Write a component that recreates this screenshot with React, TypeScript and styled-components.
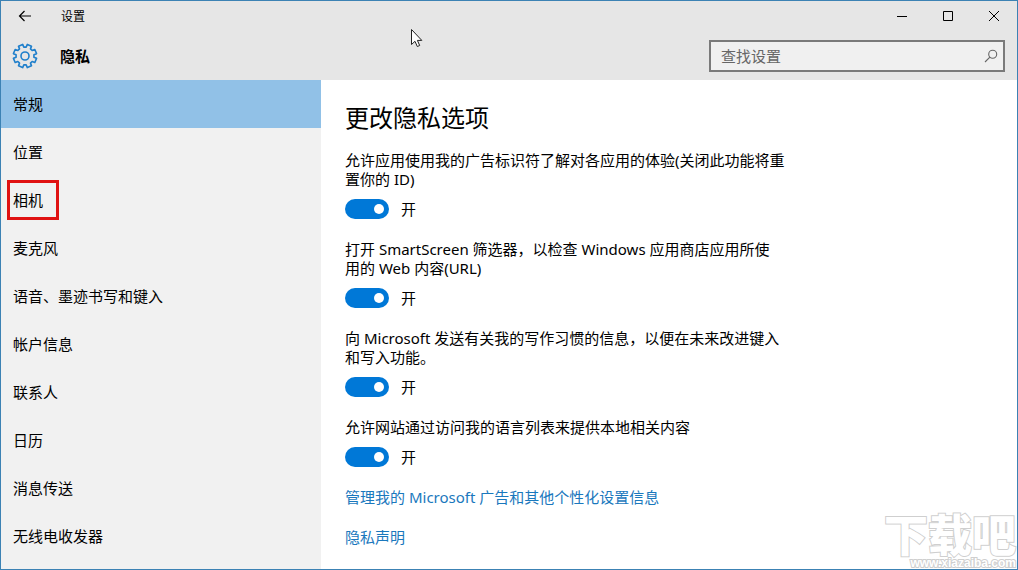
import React from "react";
import styled, { createGlobalStyle } from "styled-components";

const GlobalStyle = createGlobalStyle`
  * { box-sizing: border-box; }
  body {
    margin: 0;
    background: #fff;
    color: #000;
    font-family: "Noto Sans", "Noto Sans CJK SC", sans-serif;
    font-size: 15px;
    line-height: 19px;
  }
`;

const Window = styled.div`
  position: relative;
  display: flex;
  flex-direction: column;
  min-height: 100vh;
  overflow: hidden;
  border: 1px solid #3c82b4;
`;

const TitleBar = styled.header`
  display: flex;
  flex: none;
  align-items: center;
  height: 31px;
  padding-bottom: 1px;
  background: #e6e6e6;
`;

const BarButton = styled.button<{ $wide?: boolean }>`
  display: grid;
  place-items: center;
  width: ${(p) => (p.$wide ? "48px" : "46px")};
  height: 30px;
  padding: 0;
  border: 0;
  background: transparent;
  color: #000;
`;

const WindowTitle = styled.span`
  flex: 1;
  padding-left: 12px;
  font-size: 12px;
`;

const PageBar = styled.div`
  display: flex;
  flex: none;
  align-items: center;
  gap: 22px;
  height: 48px;
  padding: 0 12px 0 11px;
  background: #e6e6e6;
`;

const PageName = styled.h1`
  flex: 1;
  margin: 0;
  font-size: 15px;
  font-weight: 700;
`;

const SearchBox = styled.label`
  display: flex;
  align-items: center;
  width: 296px;
  height: 32px;
  padding: 0 5px 0 10px;
  border: 2px solid #7a7a7a;
  background: #f0f0f0;
`;

const SearchInput = styled.input`
  flex: 1;
  min-width: 0;
  padding: 0;
  border: 0;
  outline: 0;
  background: transparent;
  font: inherit;
  &::placeholder { color: #666; opacity: 1; }
`;

const Body = styled.div`
  display: flex;
  flex: 1;
`;

const Sidebar = styled.nav`
  flex: none;
  width: 320px;
  background: #f1f1f1;
`;

const NavItem = styled.a<{ $active?: boolean }>`
  position: relative;
  display: flex;
  align-items: center;
  height: 48px;
  padding: 0 12px;
  background: ${(p) => (p.$active ? "#91c1e7" : "transparent")};
  color: #000;
  text-decoration: none;
`;

const Marker = styled.span`
  position: absolute;
  top: 4px;
  left: 6px;
  width: 52px;
  height: 40px;
  border: 3px solid #e01212;
`;

const Content = styled.main`
  flex: 1;
  min-width: 0;
  padding: 22px 24px 0;
`;

const Heading = styled.h2`
  margin: 0 0 17px;
  font-size: 24px;
  font-weight: 400;
  line-height: 32px;
`;

const Options = styled.div`
  display: flex;
  flex-direction: column;
  align-items: flex-start;
  gap: 21px;
  max-width: 444px;
`;

const Option = styled.div`
  display: flex;
  flex-direction: column;
  gap: 10px;
`;

const OptionText = styled.label`
  white-space: pre-line;
`;

const ToggleRow = styled.div`
  display: flex;
  align-items: center;
  gap: 12px;
  height: 20px;
`;

const Toggle = styled.input`
  appearance: none;
  display: flex;
  align-items: center;
  width: 44px;
  height: 20px;
  margin: 0;
  padding: 0 5px;
  border-radius: 10px;
  background: #999;
  &::before {
    content: "";
    width: 10px;
    height: 10px;
    border-radius: 50%;
    background: #fff;
  }
  &:checked {
    justify-content: flex-end;
    background: #0078d7;
  }
`;

const TextLink = styled.a`
  color: #1a78bd;
  text-decoration: none;
`;

const Pointer = styled.svg`
  position: absolute;
  top: 27px;
  left: 409px;
`;

const Watermark = styled.div`
  position: absolute;
  right: 1px;
  bottom: 0;
  display: flex;
  flex-direction: column;
  align-items: flex-end;
  color: #fff;
  font-weight: 900;
  pointer-events: none;
  paint-order: stroke fill;
  -webkit-text-stroke: 2px #cfcfcf;
`;

const WatermarkName = styled.span`
  font-size: 44px;
  line-height: 44px;
`;

const WatermarkSite = styled.span`
  font-family: "Liberation Sans", sans-serif;
  font-size: 12px;
  font-weight: 700;
  line-height: 12px;
`;

const BackIcon = () => (
  <svg width="14" height="12" viewBox="0 0 14 12" fill="none" stroke="currentColor" strokeWidth="1.2">
    <path d="M13 6H1.5M6.5 1l-5 5 5 5" />
  </svg>
);

const toothed = () => {
  const points: string[] = [];
  for (let i = 0; i < 8; i++) {
    const mid = (i + 0.5) * 45;
    [[-15, 9], [-11, 11.8], [11, 11.8], [15, 9]].forEach(([offset, radius]) => {
      const angle = ((mid + offset) * Math.PI) / 180;
      points.push(`${(12 + radius * Math.cos(angle)).toFixed(2)} ${(12 + radius * Math.sin(angle)).toFixed(2)}`);
    });
  }
  return `M${points.join("L")}Z`;
};

const GearIcon = () => (
  <svg width="26" height="26" viewBox="-1 -1 26 26" fill="none" stroke="#1f7fcb" strokeWidth="1.6" strokeLinejoin="round">
    <path d={toothed()} />
    <circle cx="12" cy="12" r="4" />
  </svg>
);

const SearchIcon = () => (
  <svg width="14" height="14" viewBox="0 0 14 14" fill="none" stroke="#666" strokeWidth="1.1">
    <circle cx="8.7" cy="5.3" r="4" />
    <path d="M5.9 8.1L1 13" />
  </svg>
);

const categories = ["常规", "位置", "相机", "麦克风", "语音、墨迹书写和键入", "帐户信息", "联系人", "日历", "消息传送", "无线电收发器"];

const options = [
  "允许应用使用我的广告标识符了解对各应用的体验(关闭此功能将重\n置你的 ID)",
  "打开 SmartScreen 筛选器，以检查 Windows 应用商店应用所使\n用的 Web 内容(URL)",
  "向 Microsoft 发送有关我的写作习惯的信息，以便在未来改进键入\n和写入功能。",
  "允许网站通过访问我的语言列表来提供本地相关内容",
];

export default function App() {
  return (
    <Window lang="zh-CN">
      <GlobalStyle />
      <TitleBar>
        <BarButton $wide aria-label="返回"><BackIcon /></BarButton>
        <WindowTitle>设置</WindowTitle>
        <BarButton aria-label="最小化">
          <svg width="10" height="10" stroke="currentColor"><path d="M0 5.5h10" /></svg>
        </BarButton>
        <BarButton aria-label="最大化">
          <svg width="10" height="10" fill="none" stroke="currentColor"><path d="M.5.5h9v9h-9z" /></svg>
        </BarButton>
        <BarButton aria-label="关闭">
          <svg width="10" height="10" stroke="currentColor"><path d="M0 0l10 10M10 0L0 10" /></svg>
        </BarButton>
      </TitleBar>
      <PageBar>
        <GearIcon />
        <PageName>隐私</PageName>
        <SearchBox>
          <SearchInput type="text" placeholder="查找设置" aria-label="查找设置" />
          <SearchIcon />
        </SearchBox>
      </PageBar>
      <Body>
        <Sidebar>
          {categories.map((name, i) => (
            <NavItem key={name} href="#" $active={i === 0}>
              {name}
              {name === "相机" && <Marker />}
            </NavItem>
          ))}
        </Sidebar>
        <Content>
          <Heading>更改隐私选项</Heading>
          <Options>
            {options.map((text, i) => (
              <Option key={text}>
                <OptionText htmlFor={`option-${i}`}>{text}</OptionText>
                <ToggleRow>
                  <Toggle type="checkbox" role="switch" id={`option-${i}`} defaultChecked />
                  <span>开</span>
                </ToggleRow>
              </Option>
            ))}
            <TextLink href="#">管理我的 Microsoft 广告和其他个性化设置信息</TextLink>
            <TextLink href="#">隐私声明</TextLink>
          </Options>
        </Content>
      </Body>
      <Watermark>
        <WatermarkName>下载吧</WatermarkName>
        <WatermarkSite>www.xiazaiba.com</WatermarkSite>
      </Watermark>
      <Pointer width="13" height="20" viewBox="0 0 13 20" fill="#fff" stroke="#222">
        <path d="M1.5 1.5v15l3.5-3.2 2.3 5.2 2.4-1-2.3-5.1h4.4z" />
      </Pointer>
    </Window>
  );
}
